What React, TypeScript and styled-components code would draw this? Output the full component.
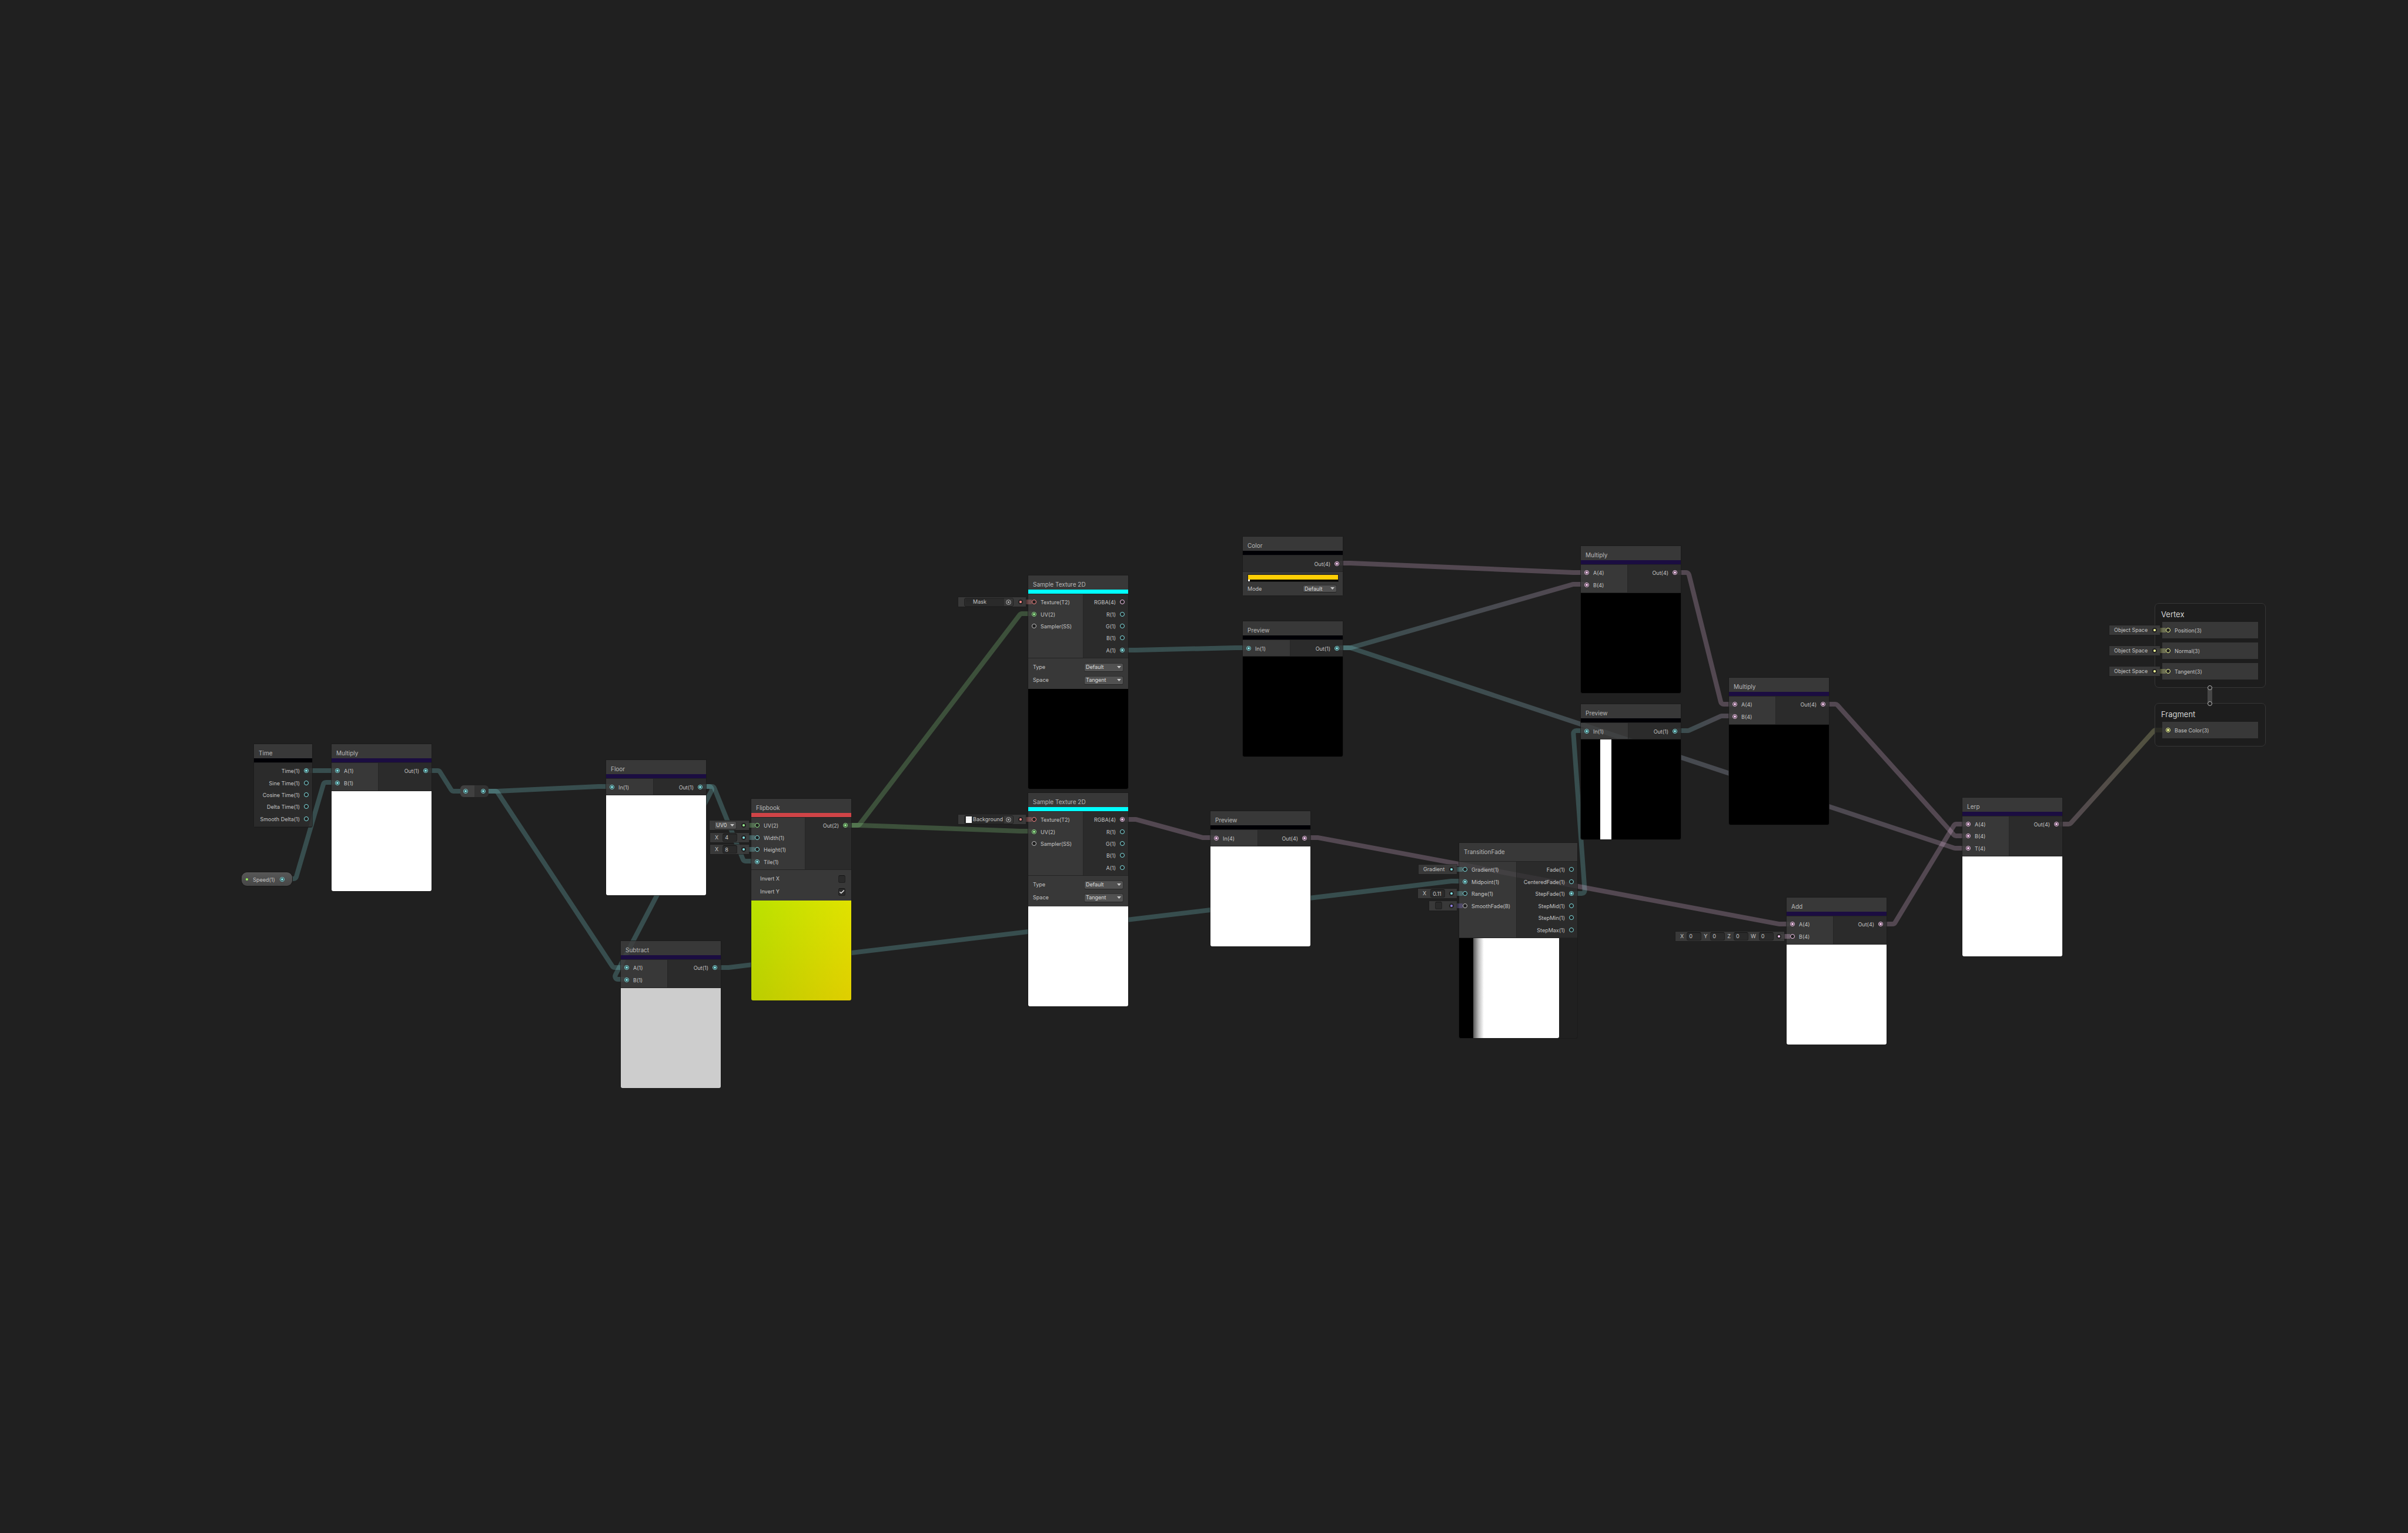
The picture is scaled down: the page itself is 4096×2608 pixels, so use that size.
import React from "react";
import styled, { createGlobalStyle, css } from "styled-components";

const TEAL = "#84e4e7";
const PINK = "#fbcbf4";
const GREEN = "#9aef92";
const YELLOW = "#f6ff9a";
const RED = "#ff8b8b";
const VIOLET = "#9481e6";
const GREY = "#c4c4c4";

const PURPLE_BAR = "#1b0d41";
const BLACK_BAR = "#000005";

const HEADER = 31;
const PREVIEW = 170;
const NODE_WIDTH = 170;
const PORT_INSET = 10;
const EDGE_LEAD = 23;
const EDGE_RADIUS = 5;

const GlobalStyle = createGlobalStyle`
  html, body { margin: 0; padding: 0; background: #202020; }
  *, *::before, *::after { box-sizing: border-box; }
  body { font-family: Inter, "Liberation Sans", sans-serif; font-size: 9px; color: #c4c4c4; }
  button, input, select { font: inherit; color: inherit; margin: 0; }
`;

const Canvas = styled.main`
  position: relative;
  width: 100%;
  height: 100vh;
  overflow: hidden;
  background: #202020;
`;

const EdgeLayer = styled.svg`
  position: absolute;
  inset: 0;
  width: 100%;
  height: 100%;
  fill: none;
`;

const NodeFrame = styled.article<{ $x: number; $y: number; $w: number }>`
  position: absolute;
  left: ${(p) => p.$x}px;
  top: ${(p) => p.$y}px;
  width: ${(p) => p.$w}px;
  border-radius: 0 0 3px 3px;
  box-shadow: 0 0 0 1px rgba(25, 25, 25, 0.7);
`;

const Header = styled.header<{ $bar?: string }>`
  height: ${HEADER}px;
  padding: 6px 8px 0;
  background: rgba(63, 63, 63, 0.8);
  border-bottom: ${(p) => (p.$bar ? `7px solid ${p.$bar}` : "0")};
  background-clip: padding-box;
`;

const Title = styled.h2`
  margin: 0;
  font-size: 10px;
  line-height: 18px;
  font-weight: 400;
  color: #b8b8b8;
  white-space: nowrap;
`;

const Ports = styled.div<{ $rows: number; $split: number }>`
  display: grid;
  grid-template-columns: ${(p) => (p.$split ? `${p.$split}px minmax(0, 1fr)` : "minmax(0, 1fr)")};
  height: ${(p) => Math.round(p.$rows * 20.4 + 8.2)}px;
  border-top: 1px solid #232323;
  border-bottom: 1px solid #232323;
`;

const Column = styled.ul<{ $rows: number; $side: "in" | "out" }>`
  margin: 0;
  padding: 3px 0;
  list-style: none;
  display: grid;
  grid-template-rows: repeat(${(p) => p.$rows}, 1fr);
  ${(p) =>
    p.$side === "in"
      ? css`
          background: rgba(63, 63, 63, 0.8);
          border-right: 1px solid #262626;
        `
      : css`
          background: rgba(46, 46, 46, 0.8);
        `}
`;

const PortRow = styled.li<{ $side: "in" | "out" }>`
  position: relative;
  display: flex;
  flex-direction: ${(p) => (p.$side === "in" ? "row" : "row-reverse")};
  align-items: center;
  gap: 7px;
  padding: 0 6px;
  min-height: 0;
`;

const PortLabel = styled.span`
  padding-top: 2px;
  line-height: 12px;
  white-space: nowrap;
`;

const PortSvg = styled.svg`
  position: relative;
  flex: none;
  width: 8px;
  height: 8px;
  display: block;
`;

const Stub = styled.span<{ $color: string }>`
  position: absolute;
  left: -13px;
  width: 19px;
  height: 8px;
  background: ${(p) => p.$color};
  opacity: 0.28;
`;

const SlotBox = styled.div<{ $w: number }>`
  position: absolute;
  right: calc(100% + 4px);
  width: ${(p) => p.$w}px;
  height: 16px;
  padding: 0 5px 0 8px;
  display: flex;
  align-items: center;
  justify-content: space-between;
  background: rgba(60, 60, 60, 0.88);
  box-shadow: 0 0 0 1px rgba(28, 28, 28, 0.6);
  line-height: 14px;
  white-space: nowrap;
`;

const SlotFields = styled.div`
  display: flex;
  align-items: center;
  gap: 4px;
`;

const FieldLabel = styled.label<{ $gap: number }>`
  display: flex;
  align-items: center;
  gap: ${(p) => p.$gap}px;
`;

const NumberInput = styled.input`
  width: 25px;
  height: 14px;
  padding: 0 3px;
  border: 1px solid #202020;
  border-top-color: #101010;
  border-radius: 3px;
  background: #2a2a2a;
  line-height: 12px;
  outline: none;
`;

const ObjectField = styled.div`
  display: flex;
  align-items: center;
  width: 84px;
  height: 15px;
  margin-left: 2px;
  padding-left: 2px;
  gap: 2px;
  border: 1px solid #202020;
  border-radius: 3px;
  background: #2a2a2a;
`;

const Thumb = styled.span<{ $light?: boolean }>`
  flex: none;
  width: 10px;
  height: 11px;
  background: ${(p) =>
    p.$light
      ? "linear-gradient(#fff 0 30%, #f0f0f0 30% 45%, #fff 45% 60%, #ececec 60% 75%, #fff 75%)"
      : "linear-gradient(#272727, #2a2a2a)"};
`;

const PickerButton = styled.button`
  flex: none;
  width: 15px;
  height: 13px;
  margin-left: auto;
  padding: 0;
  display: grid;
  place-items: center;
  border: 0;
  border-radius: 0 2px 2px 0;
  background: #373737;
`;

const SelectWrap = styled.span<{ $w: number; $h: number }>`
  position: relative;
  display: block;
  width: ${(p) => p.$w}px;
  height: ${(p) => p.$h}px;
`;

const Select = styled.select`
  appearance: none;
  display: block;
  width: 100%;
  height: 100%;
  padding: 0 2px;
  border: 1px solid #303030;
  border-bottom-color: #242424;
  border-radius: 3px;
  background: #515151;
  color: #dcdcdc;
  line-height: 12px;
  outline: none;
`;

const Caret = styled.svg`
  position: absolute;
  right: 4px;
  top: 50%;
  width: 7px;
  height: 4px;
  margin-top: -2px;
  pointer-events: none;
`;

const Check = styled.input`
  appearance: none;
  display: grid;
  place-items: center;
  width: 12px;
  height: 13px;
  border: 1px solid #202020;
  border-top-color: #151515;
  border-radius: 3px;
  background: #2a2a2a;
`;

const CheckWrap = styled.span`
  position: relative;
  display: grid;
  margin: 0 2px;
  place-items: center;
`;

const CheckMark = styled.svg`
  position: absolute;
  width: 10px;
  height: 8px;
  pointer-events: none;
`;

const Settings = styled.div<{ $indent: number }>`
  height: 52px;
  padding: 4px 8px 4px ${(p) => p.$indent}px;
  display: flex;
  flex-direction: column;
  background: rgba(63, 63, 63, 0.8);
`;

const SettingRow = styled.label`
  display: flex;
  align-items: center;
  justify-content: space-between;
  height: 22px;
  line-height: 14px;
`;

const ColorSettings = styled.div`
  padding: 4px 7px 3px 8px;
  background: rgba(63, 63, 63, 0.8);
`;

const ColorField = styled.button`
  display: flex;
  flex-direction: column;
  width: 100%;
  height: 13px;
  padding: 0;
  border: 1px solid #1c1c1c;
  background: #ffcf05;
`;

const AlphaBar = styled.span`
  width: 100%;
  height: 3px;
  margin-top: auto;
  background: linear-gradient(90deg, #fff 0 3px, #000 3px);
`;

const ModeRow = styled.label`
  display: flex;
  align-items: center;
  justify-content: space-between;
  height: 18px;
  margin-top: 2px;
  padding-right: 3px;
`;

const Preview = styled.div<{ $fill: string }>`
  width: ${PREVIEW}px;
  height: ${PREVIEW}px;
  border-radius: 0 0 3px 3px;
  background: ${(p) => p.$fill};
  background-blend-mode: screen;
`;

const Pill = styled.div<{ $x: number; $y: number }>`
  position: absolute;
  left: ${(p) => p.$x}px;
  top: ${(p) => p.$y}px;
  width: 86px;
  height: 23px;
  padding: 0 13px 0 7px;
  display: flex;
  align-items: center;
  justify-content: space-between;
  border-radius: 9px;
  background: linear-gradient(#575757, #474747);
  box-shadow: 0 0 0 1px #191919;
`;

const ExposedDot = styled.span`
  width: 4px;
  height: 4px;
  border-radius: 50%;
  background: #96ee5c;
`;

const Redirect = styled.div<{ $x: number; $y: number }>`
  position: absolute;
  left: ${(p) => p.$x}px;
  top: ${(p) => p.$y}px;
  width: 48px;
  height: 20px;
  padding: 0 5px;
  display: flex;
  align-items: center;
  justify-content: space-between;
  border-radius: 6px;
  background: linear-gradient(90deg, #404040 0 24px, #323232 24px);
`;

const Context = styled.section<{ $x: number; $y: number }>`
  position: absolute;
  left: ${(p) => p.$x}px;
  top: ${(p) => p.$y}px;
  width: 189px;
  padding: 8px 12px 13px;
  border: 1px solid #363636;
  border-radius: 7px;
  background: rgba(28, 28, 28, 0.75);
`;

const ContextTitle = styled.h1`
  margin: 0 0 3px -2px;
  font-size: 13px;
  line-height: 20px;
  font-weight: 400;
  color: #d2d2d2;
`;

const BlockList = styled.ul`
  margin: 0;
  padding: 0;
  list-style: none;
  display: grid;
  grid-auto-rows: 28px;
  gap: 7px;
`;

const Block = styled(PortRow)`
  background: rgba(60, 60, 60, 0.9);
`;

type PortDef = { label: string; color: string; on?: boolean; slot?: React.ReactNode };

function Dot({ color, on }: { color: string; on?: boolean }) {
  return (
    <PortSvg viewBox="0 0 8 8" aria-hidden="true">
      <circle cx="4" cy="4" r="3.5" fill="#1d1d1d" stroke={color} strokeWidth="1" />
      {on && <circle cx="4" cy="4" r="2" fill={color} />}
    </PortSvg>
  );
}

function SlotDot({ color }: { color: string }) {
  return (
    <PortSvg viewBox="0 0 8 8" aria-hidden="true">
      <circle cx="4" cy="4" r="4" fill="#212121" />
      <circle cx="4" cy="4" r="2" fill={color} />
    </PortSvg>
  );
}

function Slot({ w, color, children }: { w: number; color: string; children: React.ReactNode }) {
  return (
    <>
      <Stub $color={color} />
      <SlotBox $w={w}>
        <SlotFields>{children}</SlotFields>
        <SlotDot color={color} />
      </SlotBox>
    </>
  );
}

function NumField({ axis, value, gap = 7 }: { axis: string; value: string; gap?: number }) {
  return (
    <FieldLabel $gap={gap}>
      {axis}
      <NumberInput defaultValue={value} />
    </FieldLabel>
  );
}

function Dropdown({ value, w, h = 15, label }: { value: string; w: number; h?: number; label?: string }) {
  return (
    <SelectWrap $w={w} $h={h}>
      <Select defaultValue={value} aria-label={label}>
        <option>{value}</option>
      </Select>
      <Caret viewBox="0 0 7 4">
        <path d="M0 0H7L3.5 4Z" fill="#c8c8c8" />
      </Caret>
    </SelectWrap>
  );
}

function CheckBox({ checked, label }: { checked?: boolean; label?: string }) {
  return (
    <CheckWrap>
      <Check type="checkbox" defaultChecked={checked} aria-label={label} />
      {checked && (
        <CheckMark viewBox="0 0 10 8">
          <path d="M1.2 4.2 3.8 6.4 8.8 1.6" fill="none" stroke="#dedede" strokeWidth="1.5" />
        </CheckMark>
      )}
    </CheckWrap>
  );
}

function TextureField({ name, light }: { name: string; light?: boolean }) {
  return (
    <ObjectField>
      <Thumb $light={light} />
      {name}
      <PickerButton aria-label={`Pick ${name}`}>
        <svg width="9" height="9" viewBox="0 0 9 9">
          <circle cx="4.5" cy="4.5" r="3.8" fill="none" stroke="#b4b4b4" strokeWidth="1" />
          <circle cx="4.5" cy="4.5" r="1.4" fill="#b4b4b4" />
        </svg>
      </PickerButton>
    </ObjectField>
  );
}

function Port({ port, side }: { port: PortDef; side: "in" | "out" }) {
  return (
    <PortRow $side={side}>
      {port.slot}
      <Dot color={port.color} on={port.on} />
      <PortLabel>{port.label}</PortLabel>
    </PortRow>
  );
}

const p = (label: string, color: string, on = false, slot?: React.ReactNode): PortDef => ({ label, color, on, slot });

type NodeDef = {
  id: string;
  title: string;
  x: number;
  y: number;
  w?: number;
  bar?: string;
  split?: number;
  inputs?: PortDef[];
  outputs: PortDef[];
  settings?: React.ReactNode;
  preview?: string;
};

const textureInputs = (slot: React.ReactNode) => [
  p("Texture(T2)", RED, false, slot),
  p("UV(2)", GREEN, true),
  p("Sampler(SS)", GREY),
];

const textureOutputs = (used: number) => [
  p("RGBA(4)", PINK, used === 0),
  p("R(1)", TEAL, used === 1),
  p("G(1)", TEAL, used === 2),
  p("B(1)", TEAL, used === 3),
  p("A(1)", TEAL, used === 4),
];

const textureSettings = (
  <Settings $indent={8}>
    <SettingRow>
      Type
      <Dropdown value="Default" w={67} />
    </SettingRow>
    <SettingRow>
      Space
      <Dropdown value="Tangent" w={67} />
    </SettingRow>
  </Settings>
);

const NODES: NodeDef[] = [
  {
    id: "time", title: "Time", x: 432, y: 1266, w: 99, bar: BLACK_BAR,
    outputs: [
      p("Time(1)", TEAL, true),
      p("Sine Time(1)", TEAL),
      p("Cosine Time(1)", TEAL),
      p("Delta Time(1)", TEAL),
      p("Smooth Delta(1)", TEAL),
    ],
  },
  {
    id: "mult1", title: "Multiply", x: 564, y: 1266, bar: PURPLE_BAR, split: 80,
    inputs: [p("A(1)", TEAL, true), p("B(1)", TEAL, true)],
    outputs: [p("Out(1)", TEAL, true)],
    preview: "#fff",
  },
  {
    id: "floor", title: "Floor", x: 1031, y: 1293, bar: PURPLE_BAR, split: 81,
    inputs: [p("In(1)", TEAL, true)],
    outputs: [p("Out(1)", TEAL, true)],
    preview: "#fff",
  },
  {
    id: "subtract", title: "Subtract", x: 1056, y: 1601, bar: PURPLE_BAR, split: 80,
    inputs: [p("A(1)", TEAL, true), p("B(1)", TEAL, true)],
    outputs: [p("Out(1)", TEAL, true)],
    preview: "#cdcdcd",
  },
  {
    id: "flipbook", title: "Flipbook", x: 1278, y: 1359, bar: "#d04447", split: 92,
    inputs: [
      p("UV(2)", GREEN, false, (
        <Slot w={67} color={GREEN}>
          <Dropdown value="UV0" w={38} h={14} label="UV channel" />
        </Slot>
      )),
      p("Width(1)", TEAL, false, <Slot w={66} color={TEAL}><NumField axis="X" value="4" /></Slot>),
      p("Height(1)", TEAL, false, <Slot w={66} color={TEAL}><NumField axis="X" value="8" /></Slot>),
      p("Tile(1)", TEAL, true),
    ],
    outputs: [p("Out(2)", GREEN, true)],
    settings: (
      <Settings $indent={15}>
        <SettingRow>
          Invert X
          <CheckBox />
        </SettingRow>
        <SettingRow>
          Invert Y
          <CheckBox checked />
        </SettingRow>
      </Settings>
    ),
    preview: "linear-gradient(90deg, #ba0000, #e00000), linear-gradient(#00e200, #00ce00)",
  },
  {
    id: "sample1", title: "Sample Texture 2D", x: 1749, y: 979, bar: "#00ffff", split: 94,
    inputs: textureInputs(<Slot w={115} color={RED}><TextureField name="Mask" /></Slot>),
    outputs: textureOutputs(4),
    settings: textureSettings,
    preview: "#000",
  },
  {
    id: "sample2", title: "Sample Texture 2D", x: 1749, y: 1349, bar: "#00ffff", split: 94,
    inputs: textureInputs(<Slot w={115} color={RED}><TextureField name="Background" light /></Slot>),
    outputs: textureOutputs(0),
    settings: textureSettings,
    preview: "#fff",
  },
  {
    id: "color", title: "Color", x: 2114, y: 913, bar: BLACK_BAR,
    outputs: [p("Out(4)", PINK, true)],
    settings: (
      <ColorSettings>
        <ColorField aria-label="Color value">
          <AlphaBar />
        </ColorField>
        <ModeRow>
          Mode
          <Dropdown value="Default" w={58} h={13} />
        </ModeRow>
      </ColorSettings>
    ),
  },
  {
    id: "previewA", title: "Preview", x: 2114, y: 1057, bar: BLACK_BAR, split: 81,
    inputs: [p("In(1)", TEAL, true)],
    outputs: [p("Out(1)", TEAL, true)],
    preview: "#000",
  },
  {
    id: "previewB", title: "Preview", x: 2059, y: 1380, bar: BLACK_BAR, split: 81,
    inputs: [p("In(4)", PINK, true)],
    outputs: [p("Out(4)", PINK, true)],
    preview: "#fff",
  },
  {
    id: "fade", title: "TransitionFade", x: 2482, y: 1434, w: 201, split: 98,
    inputs: [
      p("Gradient(1)", TEAL, false, <Slot w={65} color={TEAL}>Gradient</Slot>),
      p("Midpoint(1)", TEAL, true),
      p("Range(1)", TEAL, false, <Slot w={66} color={TEAL}><NumField axis="X" value="0.11" /></Slot>),
      p("SmoothFade(B)", GREY, false, <Slot w={47} color={VIOLET}><CheckBox label="Smooth fade" /></Slot>),
    ],
    outputs: [
      p("Fade(1)", TEAL),
      p("CenteredFade(1)", TEAL),
      p("StepFade(1)", TEAL, true),
      p("StepMid(1)", TEAL),
      p("StepMin(1)", TEAL),
      p("StepMax(1)", TEAL),
    ],
    preview: "linear-gradient(90deg, #000 0 24px, #555 24px, #bbb 33px, #fff 42px)",
  },
  {
    id: "mult2", title: "Multiply", x: 2689, y: 929, bar: PURPLE_BAR, split: 80,
    inputs: [p("A(4)", PINK, true), p("B(4)", PINK, true)],
    outputs: [p("Out(4)", PINK, true)],
    preview: "#000",
  },
  {
    id: "previewC", title: "Preview", x: 2689, y: 1198, bar: BLACK_BAR, split: 81,
    inputs: [p("In(1)", TEAL, true)],
    outputs: [p("Out(1)", TEAL, true)],
    preview: "linear-gradient(90deg, #000 0 33px, #fff 33px 52px, #000 52px)",
  },
  {
    id: "mult3", title: "Multiply", x: 2941, y: 1153, bar: PURPLE_BAR, split: 80,
    inputs: [p("A(4)", PINK, true), p("B(4)", PINK, true)],
    outputs: [p("Out(4)", PINK, true)],
    preview: "#000",
  },
  {
    id: "add", title: "Add", x: 3039, y: 1527, bar: PURPLE_BAR, split: 80,
    inputs: [
      p("A(4)", PINK, true),
      p("B(4)", PINK, false, (
        <Slot w={185} color={PINK}>
          {["X", "Y", "Z", "W"].map((axis) => <NumField key={axis} axis={axis} value="0" gap={5} />)}
        </Slot>
      )),
    ],
    outputs: [p("Out(4)", PINK, true)],
    preview: "#fff",
  },
  {
    id: "lerp", title: "Lerp", x: 3338, y: 1357, bar: PURPLE_BAR, split: 80,
    inputs: [p("A(4)", PINK, true), p("B(4)", PINK, true), p("T(4)", PINK, true)],
    outputs: [p("Out(4)", PINK, true)],
    preview: "#fff",
  },
];

type Point = [number, number];

const rowY = (y: number, i: number) => y + 45 + Math.round(i * 20.4);

function outOf(id: string, i = 0): Point {
  const n = NODES.find((node) => node.id === id)!;
  return [n.x + (n.w ?? NODE_WIDTH) - PORT_INSET, rowY(n.y, i)];
}

function into(id: string, i = 0): Point {
  const n = NODES.find((node) => node.id === id)!;
  return [n.x + PORT_INSET, rowY(n.y, i)];
}

const REDIRECT_IN: Point = [792, 1346];
const REDIRECT_OUT: Point = [822, 1346];
const SPEED_OUT: Point = [480, 1495];
const BASE_COLOR: Point = [3688, 1242];

const EDGES: { from: Point; to: Point; a: string; b: string }[] = [
  { from: outOf("time"), to: into("mult1"), a: TEAL, b: TEAL },
  { from: SPEED_OUT, to: into("mult1", 1), a: TEAL, b: TEAL },
  { from: outOf("mult1"), to: REDIRECT_IN, a: TEAL, b: TEAL },
  { from: REDIRECT_OUT, to: into("floor"), a: TEAL, b: TEAL },
  { from: REDIRECT_OUT, to: into("subtract"), a: TEAL, b: TEAL },
  { from: outOf("floor"), to: into("flipbook", 3), a: TEAL, b: TEAL },
  { from: outOf("floor"), to: into("subtract", 1), a: TEAL, b: TEAL },
  { from: outOf("flipbook"), to: into("sample1", 1), a: GREEN, b: GREEN },
  { from: outOf("flipbook"), to: into("sample2", 1), a: GREEN, b: GREEN },
  { from: outOf("sample1", 4), to: into("previewA"), a: TEAL, b: TEAL },
  { from: outOf("sample2"), to: into("previewB"), a: PINK, b: PINK },
  { from: outOf("color"), to: into("mult2"), a: PINK, b: PINK },
  { from: outOf("previewA"), to: into("mult2", 1), a: TEAL, b: PINK },
  { from: outOf("previewA"), to: into("lerp", 2), a: TEAL, b: PINK },
  { from: outOf("subtract"), to: into("fade", 1), a: TEAL, b: TEAL },
  { from: outOf("fade", 2), to: into("previewC"), a: TEAL, b: TEAL },
  { from: outOf("previewB"), to: into("add"), a: PINK, b: PINK },
  { from: outOf("mult2"), to: into("mult3"), a: PINK, b: PINK },
  { from: outOf("previewC"), to: into("mult3", 1), a: TEAL, b: PINK },
  { from: outOf("mult3"), to: into("lerp", 1), a: PINK, b: PINK },
  { from: outOf("add"), to: into("lerp"), a: PINK, b: PINK },
  { from: outOf("lerp"), to: BASE_COLOR, a: PINK, b: YELLOW },
];

// Horizontal lead out, a straight run, a horizontal lead in, with small arcs at both bends.
function edgePath([x1, y1]: Point, [x2, y2]: Point) {
  const ax = x1 + EDGE_LEAD;
  const bx = x2 - EDGE_LEAD;
  const dx = bx - ax;
  const dy = y2 - y1;
  const len = Math.hypot(dx, dy);
  if (Math.abs(dy) < 1 || len < 1) return `M${x1} ${y1}H${x2}`;
  const ux = dx / len;
  const uy = dy / len;
  const turn = Math.acos(ux);
  const trim = Math.min(EDGE_RADIUS * Math.tan(turn / 2), EDGE_LEAD / 2, len / 2);
  const r = trim / Math.tan(turn / 2);
  const sweep = dy > 0 ? 1 : 0;
  return [
    `M${x1} ${y1}H${ax - trim}`,
    `A${r} ${r} 0 0 ${sweep} ${ax + ux * trim} ${y1 + uy * trim}`,
    `L${bx - ux * trim} ${y2 - uy * trim}`,
    `A${r} ${r} 0 0 ${1 - sweep} ${bx + trim} ${y2}`,
    `H${x2}`,
  ].join("");
}

function Edges() {
  return (
    <EdgeLayer aria-hidden="true">
      {EDGES.map((e, i) => {
        const [x1, y1] = e.from;
        const x2 = e.to[0];
        return (
          <g key={i}>
            <linearGradient id={`edge-${i}`} gradientUnits="userSpaceOnUse" x1={x1} y1={y1} x2={x2} y2={y1}>
              <stop offset="0" stopColor={e.a} />
              <stop offset="1" stopColor={e.b} />
            </linearGradient>
            <path
              d={edgePath(e.from, e.to)}
              stroke={`url(#edge-${i})`}
              strokeOpacity="0.23"
              strokeWidth="8"
              strokeLinejoin="round"
            />
          </g>
        );
      })}
    </EdgeLayer>
  );
}

function GraphNode({ node }: { node: NodeDef }) {
  const rows = Math.max(node.inputs?.length ?? 0, node.outputs.length);
  return (
    <NodeFrame $x={node.x} $y={node.y} $w={node.w ?? NODE_WIDTH}>
      <Header $bar={node.bar}>
        <Title>{node.title}</Title>
      </Header>
      <Ports $rows={rows} $split={node.split ?? 0}>
        {node.inputs && (
          <Column $rows={rows} $side="in">
            {node.inputs.map((port) => <Port key={port.label} port={port} side="in" />)}
          </Column>
        )}
        <Column $rows={rows} $side="out">
          {node.outputs.map((port) => <Port key={port.label} port={port} side="out" />)}
        </Column>
      </Ports>
      {node.settings}
      {node.preview && <Preview $fill={node.preview} />}
    </NodeFrame>
  );
}

function ContextBlock({ label, on, slot }: { label: string; on?: boolean; slot?: string }) {
  return (
    <Block $side="in">
      {slot && <Slot w={86} color={YELLOW}>{slot}</Slot>}
      <Dot color={YELLOW} on={on} />
      <PortLabel>{label}</PortLabel>
    </Block>
  );
}

const LinkLayer = styled(EdgeLayer)`
  pointer-events: none;
`;

export default function App() {
  return (
    <>
      <GlobalStyle />
      <Canvas>
        <Edges />
        {NODES.map((node) => <GraphNode key={node.id} node={node} />)}
        <Pill $x={411} $y={1484}>
          <ExposedDot />
          <PortLabel>Speed(1)</PortLabel>
          <Dot color={TEAL} on />
        </Pill>
        <Redirect $x={783} $y={1336}>
          <Dot color={TEAL} on />
          <Dot color={TEAL} on />
        </Redirect>
        <Context $x={3665} $y={1026}>
          <ContextTitle>Vertex</ContextTitle>
          <BlockList>
            <ContextBlock label="Position(3)" slot="Object Space" />
            <ContextBlock label="Normal(3)" slot="Object Space" />
            <ContextBlock label="Tangent(3)" slot="Object Space" />
          </BlockList>
        </Context>
        <Context $x={3665} $y={1196}>
          <ContextTitle>Fragment</ContextTitle>
          <BlockList>
            <ContextBlock label="Base Color(3)" on />
          </BlockList>
        </Context>
        <LinkLayer aria-hidden="true">
          <path d="M3759 1170V1197" stroke="#464646" strokeWidth="8" />
          <circle cx="3759" cy="1170" r="3.5" fill="#1d1d1d" stroke="#b8b8b8" />
          <circle cx="3759" cy="1197" r="3.5" fill="#1d1d1d" stroke="#b8b8b8" />
        </LinkLayer>
      </Canvas>
    </>
  );
}
